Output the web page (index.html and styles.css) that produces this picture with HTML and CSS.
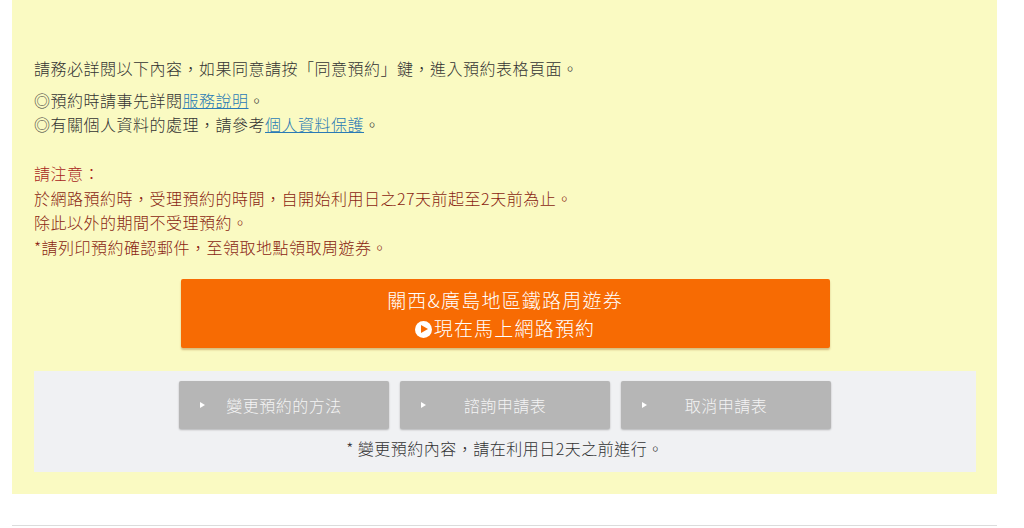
FILE: index.html
```html
<!DOCTYPE html>
<html lang="zh-Hant">

    <head>
        <meta charset="UTF-8">
        <meta name="viewport" content="width=device-width, initial-scale=1.0">
        <title>關西&amp;廣島地區鐵路周遊券 預約</title>
        <link rel="stylesheet" href="styles.css">
    </head>

    <body>
        <div class="page">
            <div class="notice-box">
                <p class="intro">請務必詳閱以下內容，如果同意請按「同意預約」鍵，進入預約表格頁面。</p>
                <p>◎預約時請事先詳閱<a href="#">服務說明</a>。<br />
                ◎有關個人資料的處理，請參考<a href="#">個人資料保護</a>。</p>
                <p class="caution">
                    <br />
                    <span class="caution-title">請注意：</span><br />
                    於網路預約時，受理預約的時間，自開始利用日之27天前起至2天前為止。<br />
                    除此以外的期間不受理預約。<br />
                    *請列印預約確認郵件，至領取地點領取周遊券。
                </p>
                <a href="#" class="reserve-button">
                    <span class="reserve-line">關西&amp;廣島地區鐵路周遊券</span>
                    <span class="reserve-line"><span class="play-icon"></span>現在馬上網路預約</span>
                </a>
                <div class="sub-panel">
                    <div class="sub-buttons">
                        <a href="#" class="sub-button">變更預約的方法</a>
                        <a href="#" class="sub-button">諮詢申請表</a>
                        <a href="#" class="sub-button">取消申請表</a>
                    </div>
                    <p class="sub-note">* 變更預約內容，請在利用日2天之前進行。</p>
                </div>
            </div>
            <div class="divider"></div>
        </div>
    </body>

</html>
```

FILE: styles.css
```css
* {
    margin: 0;
    padding: 0;
    box-sizing: border-box;
    font-family: 'Noto Sans CJK TC', 'Liberation Sans', sans-serif;
}

body {
    background-color: #ffffff;
    color: #333333;
    font-size: 16px;
    font-weight: 300;
    letter-spacing: 0.5px;
}

.page {
    width: 985px;
    margin-left: 12px;
}

.notice-box {
    background-color: #fafac2;
    padding: 56px 21px 22px 22px;
    line-height: 24.5px;
}

.intro {
    margin-bottom: 7px;
}

a {
    color: #2a7ab5;
}

.caution {
    color: #8a1e12;
}

.caution-title {
    color: #a8241a;
}

.reserve-button {
    display: flex;
    flex-direction: column;
    align-items: center;
    width: 649px;
    margin: 20px auto 0 auto;
    padding: 7px 0 6px 0;
    background-color: #f76b03;
    color: #ffffff;
    text-decoration: none;
    font-size: 19px;
    line-height: 28px;
    letter-spacing: 1.2px;
    border-radius: 2px;
    box-shadow: 0 2px 2px rgba(150, 80, 0, 0.35);
}

.reserve-line {
    display: block;
}

.play-icon {
    display: inline-block;
    width: 17px;
    height: 17px;
    margin-right: 2px;
    vertical-align: -2px;
    border-radius: 50%;
    background-color: #ffffff;
    position: relative;
}

.play-icon::after {
    content: "";
    position: absolute;
    left: 6px;
    top: 4px;
    border-left: 7px solid #f76b03;
    border-top: 4.5px solid transparent;
    border-bottom: 4.5px solid transparent;
}

.sub-panel {
    margin-top: 23px;
    background-color: #f0f1f3;
    padding: 10px 0 12px 0;
}

.sub-buttons {
    display: flex;
    justify-content: center;
    gap: 11px;
}

.sub-button {
    position: relative;
    display: block;
    width: 210px;
    height: 48px;
    line-height: 48px;
    text-align: center;
    background-color: #b6b6b6;
    color: #f4f4f4;
    text-decoration: none;
    border-radius: 2px;
    box-shadow: 0 1px 2px rgba(0, 0, 0, 0.25);
}

.sub-button::before {
    content: "";
    position: absolute;
    left: 21px;
    top: 21px;
    border-left: 5px solid #ffffff;
    border-top: 3.5px solid transparent;
    border-bottom: 3.5px solid transparent;
}

.sub-note {
    margin-top: 7px;
    text-align: center;
    line-height: 24px;
}

.divider {
    margin-top: 31px;
    height: 1px;
    background-color: #dcdcdc;
}
```
